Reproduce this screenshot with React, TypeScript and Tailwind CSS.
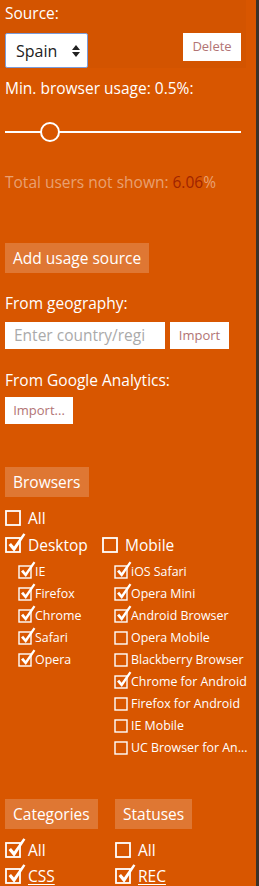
import React from 'react';

type BoxProps = { checked: boolean; small?: boolean };

const Box: React.FC<BoxProps> = ({ checked, small }) => {
  const s = small ? 13 : 15;
  return (
    <svg width={s + 6} height={s + 6} viewBox={`0 0 ${s + 6} ${s + 6}`} className="shrink-0">
      <rect x={1} y={6} width={s - 1} height={s - 1} fill="none" stroke="white" strokeWidth={small ? 1.4 : 1.8} />
      {checked && (
        <path
          d={
            small
              ? 'M3 11.5 L5.2 9.8 L7.6 12.8 L15.6 1.5 L17.4 2.8 L7.8 17 Z'
              : 'M3.5 13 L6 11 L9 14.6 L18.4 1.2 L20.4 2.6 L9.2 19.8 Z'
          }
          fill="white"
        />
      )}
    </svg>
  );
};

const Item: React.FC<{ label: string; checked: boolean; small?: boolean; underline?: boolean }> = ({
  label,
  checked,
  small,
  underline,
}) => (
  <div className={small ? 'flex items-center h-[22px]' : 'flex items-center h-[26px] gap-[2px]'}>
    <div className={small ? '-translate-y-[3px] -mr-[2px]' : '-translate-y-[3px]'}>
      <Box checked={checked} small={small} />
    </div>
    <span
      className={`${small ? 'text-[12.4px] leading-[16px]' : 'text-[15.5px] leading-[20px]'} whitespace-nowrap ${
        underline ? 'underline underline-offset-2' : ''
      }`}
    >
      {label}
    </span>
  </div>
);

const Heading: React.FC<{ children: React.ReactNode }> = ({ children }) => (
  <div className="inline-block bg-white/20 px-[8px] h-[30px] leading-[30px] text-[15.5px]">{children}</div>
);

const desktop = ['IE', 'Firefox', 'Chrome', 'Safari', 'Opera'];
const mobile: [string, boolean][] = [
  ['iOS Safari', true],
  ['Opera Mini', true],
  ['Android Browser', true],
  ['Opera Mobile', false],
  ['Blackberry Browser', false],
  ['Chrome for Android', true],
  ['Firefox for Android', false],
  ['IE Mobile', false],
  ['UC Browser for An...', false],
];

export default function App() {
  return (
    <div className="flex h-[886px] overflow-hidden font-['Open_Sans',sans-serif] text-white">
      <div className="w-[256px] bg-[#d85600]">
        <div className="w-[246px] bg-[#d35400] px-[5px] pt-[2px] h-[68px]">
          <div className="text-[15.5px] leading-[22px]">Source:</div>
          <div className="mt-[9px] flex items-start justify-between">
            <div className="flex items-center justify-between w-[83px] h-[35px] bg-white border border-[#7b9bd8] rounded-[2px] pl-[10px] pr-[7px] text-[16px] text-[#222]">
              <span>Spain</span>
              <svg width="8" height="12" viewBox="0 0 8 12">
                <path d="M4 0 L8 5 L0 5 Z M0 7 L8 7 L4 12 Z" fill="#222" />
              </svg>
            </div>
            <div className="w-[58px] h-[28px] bg-white flex items-center justify-center text-[13px] text-[#b27474]">
              Delete
            </div>
          </div>
        </div>
        <div className="px-[5px]">
          <div className="mt-[9px] text-[15.5px] leading-[22px]">Min. browser usage: 0.5%:</div>
          <div className="relative mt-[23px] h-[20px] w-[236px] flex items-center">
            <div className="h-[2px] w-full bg-white" />
            <div className="absolute left-[35px] top-0 w-[20px] h-[20px] rounded-full border-2 border-white bg-[#d85600]" />
          </div>
          <div className="mt-[29px] text-[15.5px] leading-[22px] text-white/45">
            Total users not shown: <span className="text-[#a02400]">6.06</span>%
          </div>
          <div className="mt-[50px]">
            <Heading>Add usage source</Heading>
          </div>
          <div className="mt-[19px] text-[15.5px] leading-[22px]">From geography:</div>
          <div className="mt-[8px] flex gap-[5px]">
            <div className="w-[160px] h-[27px] bg-white px-[9px] text-[15.5px] leading-[27px] text-[#aaa] whitespace-nowrap overflow-hidden">
              Enter country/regi
            </div>
            <div className="w-[59px] h-[27px] bg-white flex items-center justify-center text-[13px] text-[#b27474]">
              Import
            </div>
          </div>
          <div className="mt-[20px] text-[15.5px] leading-[22px]">From Google Analytics:</div>
          <div className="mt-[6px] w-[68px] h-[27px] bg-white flex items-center justify-center text-[13px] text-[#b27474]">
            Import...
          </div>
          <div className="mt-[43px]">
            <Heading>Browsers</Heading>
          </div>
          <div className="mt-[8px]">
            <Item label="All" checked={false} />
          </div>
          <div className="mt-[1px] flex">
            <div className="w-[97px]">
              <Item label="Desktop" checked />
            </div>
            <Item label="Mobile" checked={false} />
          </div>
          <div className="mt-[3px] flex">
            <div className="w-[109px] pl-[13px]">
              {desktop.map((d) => (
                <Item key={d} label={d} checked small />
              ))}
            </div>
            <div>
              {mobile.map(([m, c]) => (
                <Item key={m} label={m} checked={c} small />
              ))}
            </div>
          </div>
          <div className="mt-[40px] flex">
            <div className="w-[110px]">
              <Heading>Categories</Heading>
            </div>
            <Heading>Statuses</Heading>
          </div>
          <div className="mt-[8px] flex">
            <div className="w-[110px]">
              <Item label="All" checked />
              <Item label="CSS" checked underline />
            </div>
            <div>
              <Item label="All" checked={false} />
              <Item label="REC" checked underline />
            </div>
          </div>
        </div>
      </div>
      <div className="w-[3px] bg-[#3a3229]" />
    </div>
  );
}
